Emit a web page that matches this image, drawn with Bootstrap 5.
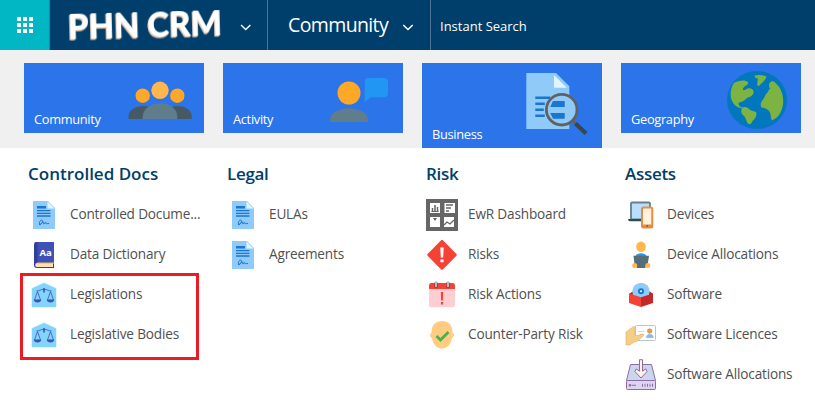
<!DOCTYPE html>
<html lang="en">
<head>
<meta charset="utf-8">
<title>PHN CRM</title>
<meta name="viewport" content="width=device-width, initial-scale=1">
<link href="https://cdn.jsdelivr.net/npm/bootstrap@5.3.0/dist/css/bootstrap.min.css" rel="stylesheet">
<style>
body{font-family:"Open Sans","Noto Sans",sans-serif;font-size:13.6px;letter-spacing:-.17px;line-height:20px;color:#505050;width:815px;height:404px;overflow:hidden}
.topbar{height:50px;background:#003e6b;color:#fff}
.waffle{width:49px;background:#00b7c3}
.brand{width:219px;border-left:1px solid #4a7596;border-right:1px solid #4a7596}
.brand text{filter:drop-shadow(-1px 1px 0 #e9d3c2) drop-shadow(0 1px 0 #8d8783)}
.area{width:163px;border-right:1px solid #4a7596;padding-left:20px}
.area-name{font-size:19.5px;line-height:28px;letter-spacing:-.62px;width:99px}
.quick{font-size:13px;padding:2px 0 0 9px;letter-spacing:0}
.tiles{height:98px;background:#f0f0f0;padding:13px 0 0 24px;gap:19px}
.tile{width:180px;height:70px;background:#2c74ea;color:#fff;padding:0 0 4px 10px;font-size:12.8px;letter-spacing:-.3px}
.tile.current{height:85px}
.columns{padding:14px 0 0 28px}
.menu-col{width:199px;flex:none}
.menu-col h2{font-size:17px;line-height:24px;font-weight:600;letter-spacing:0;color:#003e6b;margin:0 0 9px}
.menu-col h2.short{letter-spacing:-.3px}
.menu-col a{height:40px;gap:10px;color:#505050;text-decoration:none;white-space:nowrap}
.menu-col a span{padding-bottom:2px}
.framed{border:3px solid #ed1c24;width:179px;height:87px;margin:-2px 0 0 -8px;padding:0 0 0 5px}
.framed a:first-child{margin-top:-1px}
svg{display:block;flex:none}
</style>
<script src="https://cdn.jsdelivr.net/npm/bootstrap@5.3.0/dist/js/bootstrap.bundle.min.js"></script>
</head>
<body class="bg-white">
<svg width="0" height="0" class="position-absolute">
<symbol id="doc" viewBox="0 0 32 32"><path d="M5 2h15l7 7v21H5z" fill="#90caf9"/><path d="M19.500 2.500v7h7z" fill="#e1f5fe"/><path d="M9 7h9v2.500H9z" fill="#1976d2"/><path d="M9 11.600h13.500M9 14.300h13.500M9 17h13.500" stroke="#1976d2" stroke-width="1.300"/><path d="M11.500 25.500c-.8-3 1.800-5.500 2.800-4s-1.500 4.500-3.300 4c2.500.5 3-2.500 4.300-2.500s-.5 2 .5 2 1-2 1.800-1.500-.3 1.700 1 1.200 1.200.2 2.500-.2" fill="none" stroke="#1976d2" stroke-width="1"/></symbol>
<symbol id="scales" viewBox="0 0 32 32"><path d="M4 9.500 16 4l12 5.500V28H4z" fill="#81d4fa" stroke="#81d4fa" stroke-width=".5" stroke-linejoin="round"/><path d="M8.500 12c3 0 4-1.600 7.500-1.600s4.500 1.600 7.500 1.600M9.500 12.500 6.500 21h6zM22.500 12.500 19.500 21h6z" fill="none" stroke="#3f51b5" stroke-width=".8"/><path d="M5.700 20.800h7.600c-.5 3.700-7 3.700-7.600 0M18.700 20.800h7.600c-.5 3.700-7 3.700-7.600 0M15.200 9h1.600v4.500h-1.600z" fill="#3f51b5"/></symbol>
</svg>

<header class="topbar d-flex">
<div class="waffle d-flex align-items-center justify-content-center"><svg width="16" height="16" viewBox="0 0 16 16" fill="#fff"><path d="M0 0h4v4H0zM6 0h4v4H6zM12 0h4v4h-4zM0 6h4v4H0zM6 6h4v4H6zM12 6h4v4h-4zM0 12h4v4H0zM6 12h4v4H6zM12 12h4v4h-4z"/></svg></div>
<div class="brand"><svg width="217" height="50" viewBox="50 0 217 50"><text x="68" y="37" transform="rotate(-1.500 144 26)" font-family="Lato, sans-serif" font-weight="900" font-size="33.500" letter-spacing="0" textLength="154" lengthAdjust="spacingAndGlyphs" fill="#fff">PHN CRM</text><path d="m241 25 4.700 4.500 4.700-4.500" fill="none" stroke="#fff" stroke-width="1.400"/></svg></div>
<div class="area d-flex align-items-center"><span class="area-name text-nowrap">Community</span><svg class="mt-1 ms-3" width="10" height="8" viewBox="0 0 10 8"><path d="m.3 2 4.700 4.500L9.700 2" fill="none" stroke="#fff" stroke-width="1.400"/></svg></div>
<div class="quick d-flex align-items-center">Instant Search</div>
</header>

<nav class="tiles d-flex">
<div class="tile d-flex align-items-end position-relative">Community<svg class="position-absolute top-0 end-0" width="80" height="70" viewBox="100 0 80 70"><circle cx="118.700" cy="32.700" r="7.200" fill="#ffa726"/><circle cx="153.300" cy="32.700" r="7.200" fill="#ffa726"/><path d="M104.500 56v-3c1-13 28-13.500 29 0v3zM138.700 56v-3c1-13 28-13.500 29 0v3z" fill="#455a64"/><circle cx="136" cy="27.300" r="8.700" fill="#ffb74d"/><path d="M118.700 56v-3c2-17 33-17 34.600 0v3z" fill="#607d8b"/></svg></div>
<div class="tile d-flex align-items-end position-relative">Activity<svg class="position-absolute top-0 end-0" width="80" height="70" viewBox="100 0 80 70"><circle cx="126" cy="30" r="11.500" fill="#ffa726"/><path d="M107 59v-3c2.500-14.200 35.500-14.200 38 0v3z" fill="#607d8b"/><path d="M146 15h15q4 0 4 4v11.300q0 4-4 4h-13.300l-6 5V19q0-4 4.300-4" fill="#2196f3"/></svg></div>
<div class="tile current d-flex align-items-end position-relative">Business<svg class="position-absolute top-0 end-0" width="80" height="85" viewBox="100 0 80 85"><path d="M104.300 10H134l13.300 13.300V66h-43z" fill="#90caf9"/><path d="M132 12v12.700h12.700z" fill="#e1f5fe"/><path d="M113.300 33.500h15v2.500h-15zM113.300 39.500h9.500V42h-9.500zM113.300 45.500h8.500V48h-8.500zM113.300 51.500h9.500V54h-9.500z" fill="#1976d2"/><circle cx="139.700" cy="46.700" r="15.300" fill="#90caf9" stroke="#616161" stroke-width="2.800"/><path d="M131 38h11.700v6h-14.500zM128.200 50h14.500v5.700H131z" fill="#1976d2"/><path d="m150.500 57.500 4 4" stroke="#616161" stroke-width="2.800"/><path d="m153.500 60.500 10.500 10" stroke="#37474f" stroke-width="4.200"/></svg></div>
<div class="tile d-flex align-items-end position-relative">Geography<svg class="position-absolute top-0 end-0" width="80" height="70" viewBox="100 0 80 70"><ellipse cx="136" cy="37" rx="30" ry="29" fill="#0277bd"/><path d="M133.500 12.500c4-1 8-.8 12 1-1 4-5 7-8.500 10-1.500-3-.5-5.500 0-8-2 .2-3.500-1-3.500-3M113 20c4-3 12-3.500 14-1 .5 3-2 3-4 5-2 2.500-1 3.500 1 3 3.500-3 8-1.500 8.500 1.500.5 3-2.500 5-5.500 6-3 1.500-4 4-7 4.500-3 .5-3 2-1.500 4l3 2c-4 0-8-2-9.500-5.500-4-5-2.500-15 1-19.500M121 44.500c3-1.500 6 0 8 2.500l6 2c1.500 3-1 7-3.500 9-1 2.500-2 3.500-4 3-3-3-2-6-5-8.500s-2.500-5-1.500-8M148.500 20c2-2.500 4.500-2.500 6 0 8 6.500 10 20 5 29.500-1.500 3-4 6-8.500 8-2-3-.5-6-2.500-9-2-2-4-3.500-8-4-1.500-2-1-5 1.500-8 2-2.500 2-5 4.500-7 1.500-2 1-3.500 3.500-4.500-2 .5-2.500-2-1.500-5" fill="#7cb342"/></svg></div>
</nav>

<main class="columns d-flex">
<section class="menu-col">
<h2>Controlled Docs</h2>
<a class="d-flex align-items-center" href="#"><svg width="32" height="32"><use href="#doc"/></svg><span>Controlled Docume...</span></a>
<a class="d-flex align-items-center" href="#"><svg width="32" height="32" viewBox="0 0 32 32"><path d="M8 3h18v26H9q-3 0-3-3V6q0-3 2-3" fill="#303f9f"/><path d="M9.500 3H26v21H9.500z" fill="#3f51b5"/><path d="M9 24h16v4H9q-1.800 0-1.800-2T9 24" fill="#ffe0b2"/><path d="M9 24h17" stroke="#f9b25f"/><text x="11.500" y="17" fill="#fff" font-size="9.500" font-weight="700" textLength="12" lengthAdjust="spacingAndGlyphs">Aa</text></svg><span>Data Dictionary</span></a>
<div class="framed"><a class="d-flex align-items-center" href="#"><svg width="32" height="32"><use href="#scales"/></svg><span>Legislations</span></a>
<a class="d-flex align-items-center" href="#"><svg width="32" height="32"><use href="#scales"/></svg><span>Legislative Bodies</span></a></div>
</section>
<section class="menu-col">
<h2 class="short">Legal</h2>
<a class="d-flex align-items-center" href="#"><svg width="32" height="32"><use href="#doc"/></svg><span>EULAs</span></a>
<a class="d-flex align-items-center" href="#"><svg width="32" height="32"><use href="#doc"/></svg><span>Agreements</span></a>
</section>
<section class="menu-col">
<h2 class="short">Risk</h2>
<a class="d-flex align-items-center" href="#"><svg width="32" height="32" viewBox="0 0 32 32"><path d="M0 0h32v32H0z" fill="#666"/><path d="M4 4h10v10H4zM18.500 4H29v10H18.500zM4 18h10v10H4zM18 18h10v10H18z" fill="#fff"/><path d="M6.500 9v4M9 6v7M11.500 8v5M20 6h7M20 9h5M20 12h3" stroke="#666" stroke-width="1.500"/><path d="M5.500 12.500h7" stroke="#666"/><path d="M7 19h4l-2 3z" fill="#666"/><path d="m18 26 3-3 3 2 4-4" fill="none" stroke="#666" stroke-width="1.300"/></svg><span>EwR Dashboard</span></a>
<a class="d-flex align-items-center" href="#"><svg width="32" height="32" viewBox="0 0 32 32"><path d="M16 2.200 29.500 15.800 16 29.500 2.500 15.800z" fill="#f44336" stroke="#f44336" stroke-width="2.500" stroke-linejoin="round"/><path d="M14.300 8.500h3.400l-.5 10h-2.400zM14.400 20.500h3.200v2.800h-3.200z" fill="#fff"/></svg><span>Risks</span></a>
<a class="d-flex align-items-center" href="#"><svg width="32" height="32" viewBox="0 0 32 32"><path d="M3 9h26v17q0 2.300-2 2.300H5q-2 0-2-2.300z" fill="#ffcdd2"/><path d="M3 10V6.500Q3 4 5 4h22q2 0 2 2.500V10z" fill="#f44336"/><path d="M10 5v2M22 5v2" stroke="#b71c1c" stroke-width="4" stroke-linecap="round"/><path d="M10 3.500v3.500M22 3.500v3.500" stroke="#b0bec5" stroke-width="2.400" stroke-linecap="round"/><path d="M14.800 13h2.400l-.3 8.500h-1.800zM14.900 23h2.200v2.500h-2.200z" fill="#f44336"/></svg><span>Risk Actions</span></a>
<a class="d-flex align-items-center" href="#"><svg width="32" height="32" viewBox="0 0 32 32"><path d="M16 2c7 0 10.500 4 10.500 12 2 .5 2 4-.5 5-1 6.500-5 10.500-10 10.500S7 25.500 6 19c-2.500-1-2.500-4.500-.5-5C5.500 6 9 2 16 2" fill="#ffcc80"/><path d="m10.500 17 4 4 8-8" fill="none" stroke="#4caf50" stroke-width="2.800"/></svg><span>Counter-Party Risk</span></a>
</section>
<section class="menu-col">
<h2 class="short">Assets</h2>
<a class="d-flex align-items-center" href="#"><svg width="32" height="32" viewBox="0 0 32 32"><rect x="6" y="3.500" width="19" height="17" rx="1" fill="#bbdefb" stroke="#64808c" stroke-width="1.800"/><path d="M3 20h15v2.200H5q-2 0-2-2.200" fill="#37474f"/><rect x="17" y="8.500" width="10.300" height="20" rx="1.500" fill="#fff3e0" stroke="#e38c43" stroke-width="2"/><path d="M17 25.500h10.300v3H17z" fill="#e38c43"/><circle cx="22.200" cy="27" r="1" fill="#a35319"/></svg><span>Devices</span></a>
<a class="d-flex align-items-center" href="#"><svg width="32" height="32" viewBox="0 0 32 32"><path d="M10.500 18c0-5 11-5 11 0z" fill="#2196f3"/><ellipse cx="16" cy="7.800" rx="4.800" ry="5.300" fill="#ffb74d"/><path d="M8.500 16.700h15.500l-1.200 8.500-2.300 2v1.800h-8.800v-1.800L9.500 25z" fill="#546e7a"/><circle cx="9.700" cy="26.500" r="2.500" fill="#ffb74d"/><circle cx="22.800" cy="26.500" r="2.500" fill="#ffb74d"/></svg><span>Device Allocations</span></a>
<a class="d-flex align-items-center" href="#"><svg width="32" height="32" viewBox="0 0 32 32"><path d="m4 15 6-4h13l5 4-12 7z" fill="#b71c1c"/><circle cx="16" cy="12.500" r="8.700" fill="#90caf9"/><circle cx="16" cy="12.300" r="3" fill="#1976d2"/><circle cx="16" cy="12.300" r="1" fill="#fff"/><path d="m4 14.500 12 3.800V28L4 24z" fill="#f44336"/><path d="m28 14.500-12 3.800V28l12-4z" fill="#c62828"/></svg><span>Software</span></a>
<a class="d-flex align-items-center" href="#"><svg width="32" height="32" viewBox="0 0 32 32"><rect x="10.500" y="6.500" width="20" height="15" rx="1" fill="#fff" stroke="#b8c6d0"/><path d="M13 12.500h6M15 15.500h4" stroke="#cfd8dc"/><circle cx="24.700" cy="12" r="2.300" fill="#dca352" stroke="#b9853e" stroke-width=".5"/><path d="M21.300 18.500c.5-4.500 6.500-4.500 7 0z" fill="#8bb7f0" stroke="#6ba4d8" stroke-width=".5"/><path d="m1 13 7.500-5.500c1-.5 1.500.5 1 1.500v7l3 .5 5-1.500c1.500 0 1.200 1.800 0 2.500l-5 4.500-3 1-5 3H1z" fill="#f5ce85" stroke="#dfac5d" stroke-width=".6"/></svg><span>Software Licences</span></a>
<a class="d-flex align-items-center" href="#"><svg width="32" height="32" viewBox="0 0 32 32"><path d="M5.500 5.500h21l4 16h-29z" fill="#cbd5ec" stroke="#8d6ca8"/><rect x="1.500" y="21.500" width="29" height="9" rx="1" fill="#dcd5f0" stroke="#8d6ca8"/><circle cx="5" cy="26.300" r="1.300" fill="#8d6ca8"/><path d="M7 26.300h4" stroke="#8d6ca8"/><path d="M17.500 24.800v3M20 24.800v3M22.500 24.800v3M25 24.800v3M27.500 24.800v3" stroke="#8d6ca8"/><path d="M14.500.7h3v11.500l3.300-2.300 1.200 2.600-6 6.500-6-6.500 1.200-2.600 3.300 2.300z" fill="#fff3e0" stroke="#8d6ca8"/></svg><span>Software Allocations</span></a>
</section>
</main>
</body>
</html>
